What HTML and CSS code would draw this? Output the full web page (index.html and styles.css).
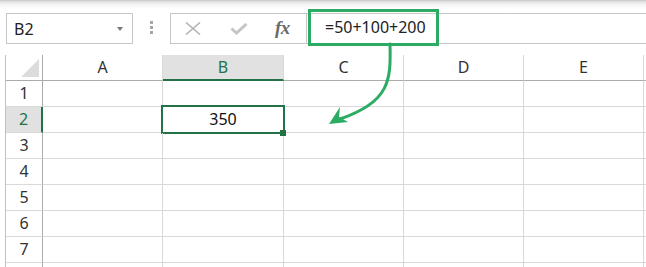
FILE: index.html
```html
<!DOCTYPE html>
<html>
<head>
<meta charset="utf-8">
<link rel="stylesheet" href="styles.css">
</head>
<body>
<div class="toolbar">
  <div class="namebox"><span class="nb-text">B2</span><span class="caret"></span></div>
  <div class="dots"><i></i><i></i><i></i></div>
  <div class="fxbox">
    <svg class="ico" width="16" height="13" viewBox="0 0 16 13"><path d="M1 0.5 L15 12.5 M15 0.5 L1 12.5" stroke="#b4b4b4" stroke-width="1.6" fill="none"/></svg>
    <svg class="ico" width="18" height="12" viewBox="0 0 18 12"><path d="M1.5 5.5 L6.5 10 L16.5 1" stroke="#c4c4c4" stroke-width="3" fill="none"/></svg>
    <span class="fx">fx</span>
  </div>
  <div class="formula">
    <div class="hl">=50+100+200</div>
  </div>
</div>
<div class="grid">
  <div class="cell corner"><svg width="36" height="25" viewBox="0 0 36 25"><polygon points="33,4 33,22 15,22" fill="#dcdcdc"/></svg></div>
  <div class="cell colh">A</div>
  <div class="cell colh sel">B</div>
  <div class="cell colh">C</div>
  <div class="cell colh">D</div>
  <div class="cell colh">E</div>
  <div class="cell colh last"></div>

  <div class="cell rowh">1</div><div class="cell"></div><div class="cell"></div><div class="cell"></div><div class="cell"></div><div class="cell"></div><div class="cell last"></div>
  <div class="cell rowh sel">2</div><div class="cell"></div><div class="cell active">350<span class="handle"></span></div><div class="cell"></div><div class="cell"></div><div class="cell"></div><div class="cell last"></div>
  <div class="cell rowh">3</div><div class="cell"></div><div class="cell"></div><div class="cell"></div><div class="cell"></div><div class="cell"></div><div class="cell last"></div>
  <div class="cell rowh">4</div><div class="cell"></div><div class="cell"></div><div class="cell"></div><div class="cell"></div><div class="cell"></div><div class="cell last"></div>
  <div class="cell rowh">5</div><div class="cell"></div><div class="cell"></div><div class="cell"></div><div class="cell"></div><div class="cell"></div><div class="cell last"></div>
  <div class="cell rowh">6</div><div class="cell"></div><div class="cell"></div><div class="cell"></div><div class="cell"></div><div class="cell"></div><div class="cell last"></div>
  <div class="cell rowh">7</div><div class="cell"></div><div class="cell"></div><div class="cell"></div><div class="cell"></div><div class="cell"></div><div class="cell last"></div>
  <div class="cell rowh"></div><div class="cell"></div><div class="cell"></div><div class="cell"></div><div class="cell"></div><div class="cell"></div><div class="cell last"></div>
</div>
<svg class="annot" width="646" height="267" viewBox="0 0 646 267">
  <path d="M390 44 C 391 80, 390 102, 340 119" stroke="#2bab63" stroke-width="3" fill="none" stroke-linecap="round"/>
  <polygon points="329,124 340,107 339,117 348,122" fill="#2bab63"/>
</svg>
</body>
</html>
```

FILE: styles.css
```css
html, body {
  margin: 0;
  padding: 0;
}
body {
  width: 646px;
  height: 267px;
  overflow: hidden;
  background: #fff;
  font-family: "Noto Sans", "Open Sans", sans-serif;
  color: #222;
  position: relative;
}
.toolbar {
  height: 55px;
  box-sizing: border-box;
  padding: 13px 0 0 6px;
  display: flex;
  align-items: flex-start;
  background: linear-gradient(#c8c8c8 0, #e4e4e4 2px, #f6f6f6 5px, #fff 9px);
}
.namebox {
  width: 127px;
  height: 31px;
  box-sizing: border-box;
  border: 1px solid #c6c6c6;
  background: #fff;
  display: flex;
  align-items: center;
  padding-left: 7px;
  font-size: 16px;
  color: #222;
}
.nb-text { flex: 1; }
.caret {
  width: 0;
  height: 0;
  border-left: 3.5px solid transparent;
  border-right: 3.5px solid transparent;
  border-top: 4px solid #777;
  margin-right: 9px;
}
.dots {
  margin-left: 17px;
  padding-top: 8px;
  display: flex;
  flex-direction: column;
  gap: 2px;
}
.dots i {
  display: block;
  width: 3px;
  height: 3px;
  background: #a6a6a6;
}
.fxbox {
  margin-left: 17px;
  width: 137px;
  height: 31px;
  box-sizing: border-box;
  border: 1px solid #c6c6c6;
  background: #fff;
  display: flex;
  align-items: center;
  padding-left: 14px;
}
.fxbox .ico:nth-child(2) { margin-left: 29px; margin-top: 1px; }
.fx {
  margin-left: 27px;
  font-family: "Liberation Serif", serif;
  font-style: italic;
  font-weight: bold;
  font-size: 19px;
  color: #6a6a6a;
  letter-spacing: -0.5px;
  margin-top: -2px;
}
.formula {
  flex: 1;
  height: 31px;
  box-sizing: border-box;
  border-top: 1px solid #c6c6c6;
  border-bottom: 1px solid #c6c6c6;
  background: #fff;
  position: relative;
}
.hl {
  position: absolute;
  left: 1px;
  top: -5px;
  width: 131px;
  height: 37px;
  box-sizing: border-box;
  border: 3px solid #2bab63;
  padding-left: 14px;
  font-size: 16px;
  line-height: 30px;
  color: #222;
}
.grid {
  margin-left: 5px;
  border-left: 1px solid #c0c0c0;
  display: grid;
  grid-template-columns: 37px 120px 121px 120px 120px 120px 3px;
  grid-auto-rows: 26px;
}
.cell {
  box-sizing: border-box;
  border-right: 1px solid #d9d9d9;
  border-bottom: 1px solid #d9d9d9;
  font-size: 16px;
  line-height: 25px;
  text-align: center;
  position: relative;
}
.cell.last { border-right: none; }
.colh {
  border-bottom-color: #ababab;
  color: #333;
}
.colh.last { border-bottom-color: #ababab; }
.corner {
  border-bottom-color: #ababab;
  border-right-color: #ababab;
}
.corner svg { display: block; }
.rowh {
  border-right-color: #ababab;
  color: #333;
}
.colh.sel {
  background: #e1e1e1;
  color: #217346;
  border-bottom: 2px solid #217346;
  line-height: 24px;
}
.rowh.sel {
  background: #e1e1e1;
  color: #217346;
  border-right: 2px solid #217346;
}
.active { color: #111; }
.active::after {
  content: "";
  position: absolute;
  left: -2px;
  top: -2px;
  right: -2px;
  bottom: -2px;
  border: 2px solid #217346;
}
.handle {
  position: absolute;
  right: -3px;
  bottom: -4px;
  width: 6px;
  height: 6px;
  background: #217346;
  z-index: 2;
}
.annot {
  position: absolute;
  left: 0;
  top: 0;
  pointer-events: none;
}
```
